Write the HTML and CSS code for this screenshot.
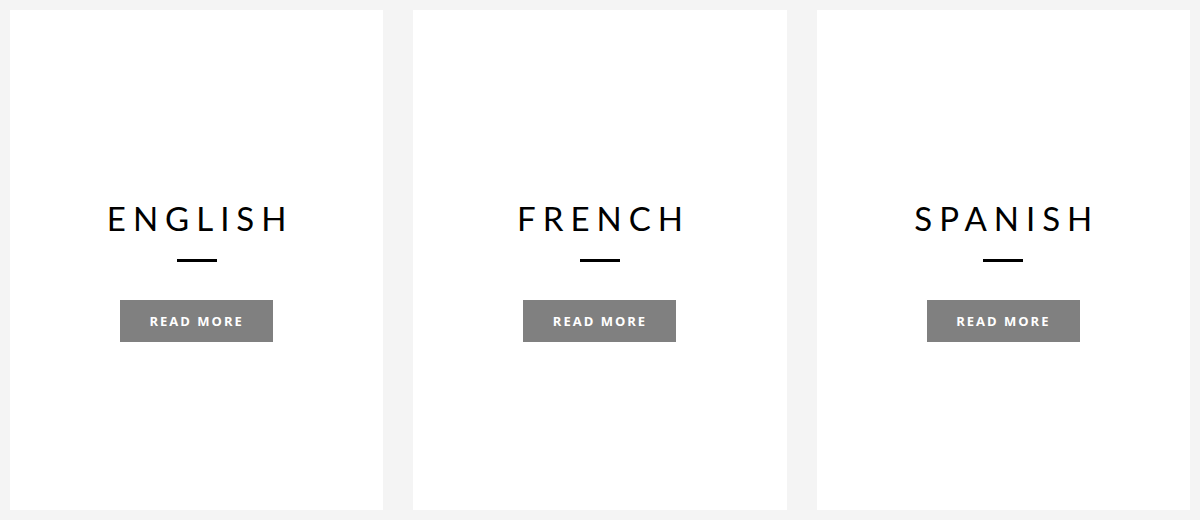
FILE: index.html
```html
<!DOCTYPE html>
<html lang="en">
<head>
<meta charset="UTF-8" />
<title>Languages</title>
<link rel="stylesheet" href="styles.css">
</head>
<body>
<div class="cards">
  <div class="card">
    <h2 class="card-title">English</h2>
    <span class="divider"></span>
    <a class="btn" href="#">Read More</a>
  </div>
  <div class="card">
    <h2 class="card-title">French</h2>
    <span class="divider"></span>
    <a class="btn" href="#">Read More</a>
  </div>
  <div class="card">
    <h2 class="card-title">Spanish</h2>
    <span class="divider"></span>
    <a class="btn" href="#">Read More</a>
  </div>
</div>
</body>
</html>
```

FILE: styles.css
```css
* {
  box-sizing: border-box;
}
body {
  margin: 0;
  background: #f4f4f4;
  font-family: 'Open Sans', sans-serif;
}
.cards {
  display: grid;
  grid-template-columns: repeat(3, 1fr);
  gap: 30px;
  padding: 10px;
}
.card {
  background: #fff;
  height: 500px;
  display: flex;
  flex-direction: column;
  align-items: center;
  padding-top: 188px;
}
.card-title {
  margin: 0;
  font-family: 'Lato', sans-serif;
  font-weight: 400;
  font-size: 33px;
  line-height: 40px;
  letter-spacing: 7px;
  text-transform: uppercase;
  color: #000;
  padding-left: 7px;
}
.divider {
  display: block;
  width: 40px;
  height: 3px;
  background: #000;
  margin-top: 21px;
}
.btn {
  display: inline-block;
  margin-top: 38px;
  width: 153px;
  height: 42px;
  line-height: 42px;
  text-align: center;
  background: #808080;
  color: #fff;
  font-size: 13px;
  font-weight: 700;
  letter-spacing: 2px;
  text-transform: uppercase;
  text-decoration: none;
}
```
